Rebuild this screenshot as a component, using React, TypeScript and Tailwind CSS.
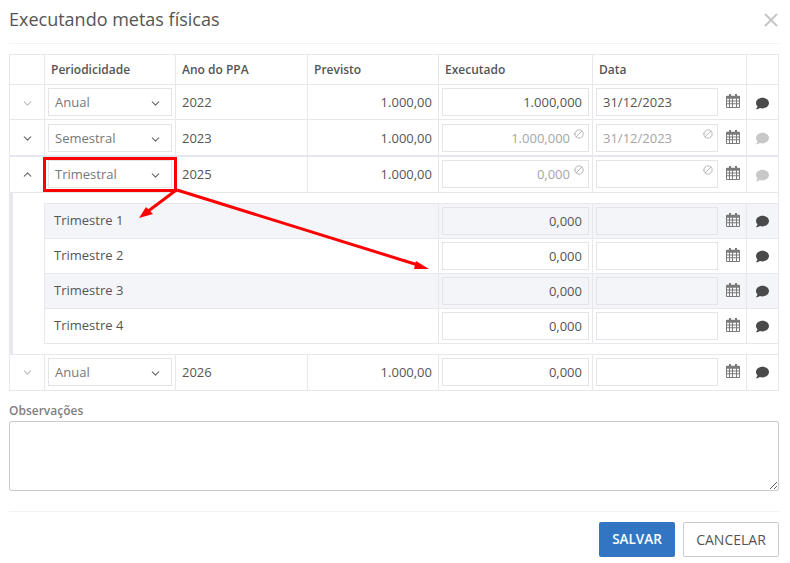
import { Ban, ChevronDown, ChevronUp, X } from "lucide-react";
import { FaComment } from "react-icons/fa";

const COLS = "grid-cols-[35px_131px_132px_131px_154px_154px_32px]";
const SUB_COLS = "grid-cols-[393px_154px_154px_32px]";

function CalendarIcon() {
  return (
    <svg width="14" height="14" viewBox="0 0 14 15" preserveAspectRatio="none" className="mb-[2px] shrink-0 text-[#7a7a7a]">
      <path
        fill="currentColor"
        fillRule="evenodd"
        d="M3 0h2v2h4V0h2v2h2a1 1 0 0 1 1 1v11a1 1 0 0 1-1 1H1a1 1 0 0 1-1-1V3a1 1 0 0 1 1-1h2V0zM1 5v2h2V5H1zm3 0v2h2V5H4zm3 0v2h3V5H7zm4 0v2h2V5h-2zM1 8v2h2V8H1zm3 0v2h2V8H4zm3 0v2h3V8H7zm4 0v2h2V8h-2zM1 11v3h2v-3H1zm3 0v3h2v-3H4zm3 0v3h3v-3H7zm4 0v3h2v-3h-2z"
      />
    </svg>
  );
}

function Field({
  value = "",
  align = "right",
  locked = false,
  tint = false,
}: {
  value?: string;
  align?: "left" | "right";
  locked?: boolean;
  tint?: boolean;
}) {
  return (
    <div
      className={`relative flex h-7 w-full items-center border border-[#e4e4e8] pt-[2px] text-[13px] ${
        tint ? "bg-[#f4f5f9]" : "bg-white"
      } ${locked ? "text-[#a5a5a5]" : "text-[#555]"} ${
        align === "right" ? "justify-end" : "justify-start"
      } ${align === "right" && locked ? "pr-[18px]" : "px-[6px]"}`}
    >
      {value}
      {locked && (
        <Ban
          size={10}
          strokeWidth={2}
          className="absolute right-[4px] top-[4px] -scale-x-100 text-[#aaa]"
        />
      )}
    </div>
  );
}

function Cell({ className = "", children }: { className?: string; children?: React.ReactNode }) {
  return (
    <div className={`flex items-center border-l border-[#e7e7ec] ${className}`}>{children}</div>
  );
}

/* colunas executado / data / calendário / comentário */
function ValueCells({
  executed,
  date = "",
  locked = false,
  tint = false,
  mutedComment = false,
  fieldPad = "",
  commentPad = "",
}: {
  executed: string;
  date?: string;
  locked?: boolean;
  tint?: boolean;
  mutedComment?: boolean;
  fieldPad?: string;
  commentPad?: string;
}) {
  return (
    <>
      <Cell className={`px-[3px] ${fieldPad}`}>
        <Field value={executed} locked={locked} tint={tint} />
      </Cell>
      <Cell className={`gap-[8px] pl-[3px] pr-[7px] ${fieldPad}`}>
        <div className="w-[122px] shrink-0">
          <Field value={date} align="left" locked={locked} tint={tint} />
        </div>
        <CalendarIcon />
      </Cell>
      <Cell className={`justify-center ${commentPad}`}>
        <FaComment size={13} className={mutedComment ? "text-[#c8c8c8]" : "text-[#4a4a4a]"} />
      </Cell>
    </>
  );
}

type RowProps = {
  period: string;
  year: string;
  executed: string;
  date?: string;
  locked?: boolean;
  open?: boolean;
  mutedChevron?: boolean;
  mutedComment?: boolean;
  textPad?: string;
  fieldPad?: string;
  commentPad?: string;
  className: string;
};

function YearRow({
  period,
  year,
  executed,
  date,
  locked,
  open,
  mutedChevron,
  mutedComment,
  textPad = "",
  fieldPad = "",
  commentPad = "",
  className,
}: RowProps) {
  const Chevron = open ? ChevronUp : ChevronDown;
  return (
    <div className={`grid ${COLS} border-r border-[#e7e7ec] ${className}`}>
      <Cell className={`justify-center ${textPad}`}>
        <Chevron size={13} className={mutedChevron ? "text-[#bbb]" : "text-[#666]"} />
      </Cell>
      <Cell className={`px-[3px] ${fieldPad}`}>
        <div className="flex h-7 w-full items-center justify-between border border-[#e4e4e8] pl-[6px] pr-[9px] pt-[2px] text-[13px] text-[#777]">
          {period}
          <ChevronDown size={13} className="text-[#666]" />
        </div>
      </Cell>
      <Cell className={`px-[6px] text-[13px] text-[#555] ${textPad}`}>{year}</Cell>
      <Cell className={`justify-end px-[6px] text-[13px] text-[#555] ${textPad}`}>1.000,00</Cell>
      <ValueCells
        executed={executed}
        date={date}
        locked={locked}
        mutedComment={mutedComment}
        fieldPad={fieldPad}
        commentPad={commentPad}
      />
    </div>
  );
}

function QuarterRow({ label, tint }: { label: string; tint: boolean }) {
  return (
    <div
      className={`grid h-[35px] ${SUB_COLS} border-b border-[#e7e7ec] ${
        tint ? "bg-[#f4f5f9]" : "bg-white"
      }`}
    >
      <div className="flex items-center pl-[9px] text-[13px] text-[#555]">{label}</div>
      <ValueCells executed="0,000" tint={tint} />
    </div>
  );
}

function Header({ children }: { children?: React.ReactNode }) {
  return <Cell className="px-[6px] text-[12px] font-semibold text-[#555]">{children}</Cell>;
}

export default function App() {
  return (
    <div className="relative h-[563px] w-[790px] overflow-hidden bg-white pl-[9px] pr-[11px] font-['Open_Sans',sans-serif]">
      {/* titulo */}
      <div className="flex h-[44px] items-center justify-between border-b border-[#f2f2f4] pb-[4px]">
        <h1 className="text-[18px] font-normal text-[#555]">Executando metas físicas</h1>
        <X size={22} strokeWidth={2} className="mr-[-3px] text-[#c4c4c4]" />
      </div>

      {/* tabela */}
      <div className="mt-[10px]">
        <div className={`grid h-[31px] ${COLS} border-y border-r border-[#e7e7ec]`}>
          <Header />
          <Header>Periodicidade</Header>
          <Header>Ano do PPA</Header>
          <Header>Previsto</Header>
          <Header>Executado</Header>
          <Header>Data</Header>
          <Header />
        </div>
        <YearRow
          period="Anual"
          year="2022"
          executed="1.000,000"
          date="31/12/2023"
          mutedChevron
          textPad="pt-[2px]"
          commentPad="pt-[2px]"
          className="h-[35px] border-b"
        />
        <YearRow
          period="Semestral"
          year="2023"
          executed="1.000,000"
          date="31/12/2023"
          locked
          mutedComment
          textPad="pt-[2px]"
          fieldPad="pt-[1px]"
          commentPad="pt-[1px]"
          className="h-[37px] border-b-2 border-b-[#e7e7ef]"
        />
        <YearRow
          period="Trimestral"
          year="2025"
          executed="0,000"
          locked
          open
          mutedComment
          fieldPad="pb-[1px]"
          commentPad="pt-[1px]"
          className="h-[36px] border-b"
        />

        {/* trimestres */}
        <div className="border-b border-l-4 border-r border-[#e7e7ec] border-l-[#e7e7ef] py-[10px] pl-[31px]">
          <div className="border-l border-t border-[#e7e7ec]">
            <QuarterRow label="Trimestre 1" tint />
            <QuarterRow label="Trimestre 2" tint={false} />
            <QuarterRow label="Trimestre 3" tint />
            <QuarterRow label="Trimestre 4" tint={false} />
          </div>
        </div>

        <YearRow
          period="Anual"
          year="2026"
          executed="0,000"
          mutedChevron
          fieldPad="pb-[1px]"
          commentPad="pb-[1px]"
          className="h-[36px] border-b"
        />
      </div>

      {/* observacoes */}
      <label className="mt-[13px] block text-[12px] font-semibold leading-[14px] text-[#808080]">
        Observações
      </label>
      <textarea className="mt-[3px] block h-[70px] w-full rounded-[2px] border border-[#ccc] bg-white" />

      {/* rodape */}
      <div className="mt-[20px] flex justify-end gap-2 border-t border-[#f2f2f4] pt-[10px]">
        <button className="h-[35px] w-[76px] rounded-[2px] bg-[#3276c3] text-[13.5px] font-semibold text-white">
          SALVAR
        </button>
        <button className="h-[35px] w-[96px] rounded-[2px] border border-[#ccc] bg-white text-[14px] text-[#555]">
          CANCELAR
        </button>
      </div>

      {/* anotacao vermelha sobre o print */}
      <div className="absolute left-[43px] top-[157px] h-[35px] w-[134px] border-[3px] border-[#ff0000]" />
      <svg width="790" height="563" className="pointer-events-none absolute left-0 top-0">
        <line x1="175" y1="191" x2="147" y2="212" stroke="#ff0000" strokeWidth="3" />
        <polygon points="139,218 146,207 153,214" fill="#ff0000" />
        <line x1="177" y1="190" x2="418" y2="265" stroke="#ff0000" strokeWidth="3" />
        <polygon points="429,269 414,269 416,261" fill="#ff0000" />
      </svg>
    </div>
  );
}
